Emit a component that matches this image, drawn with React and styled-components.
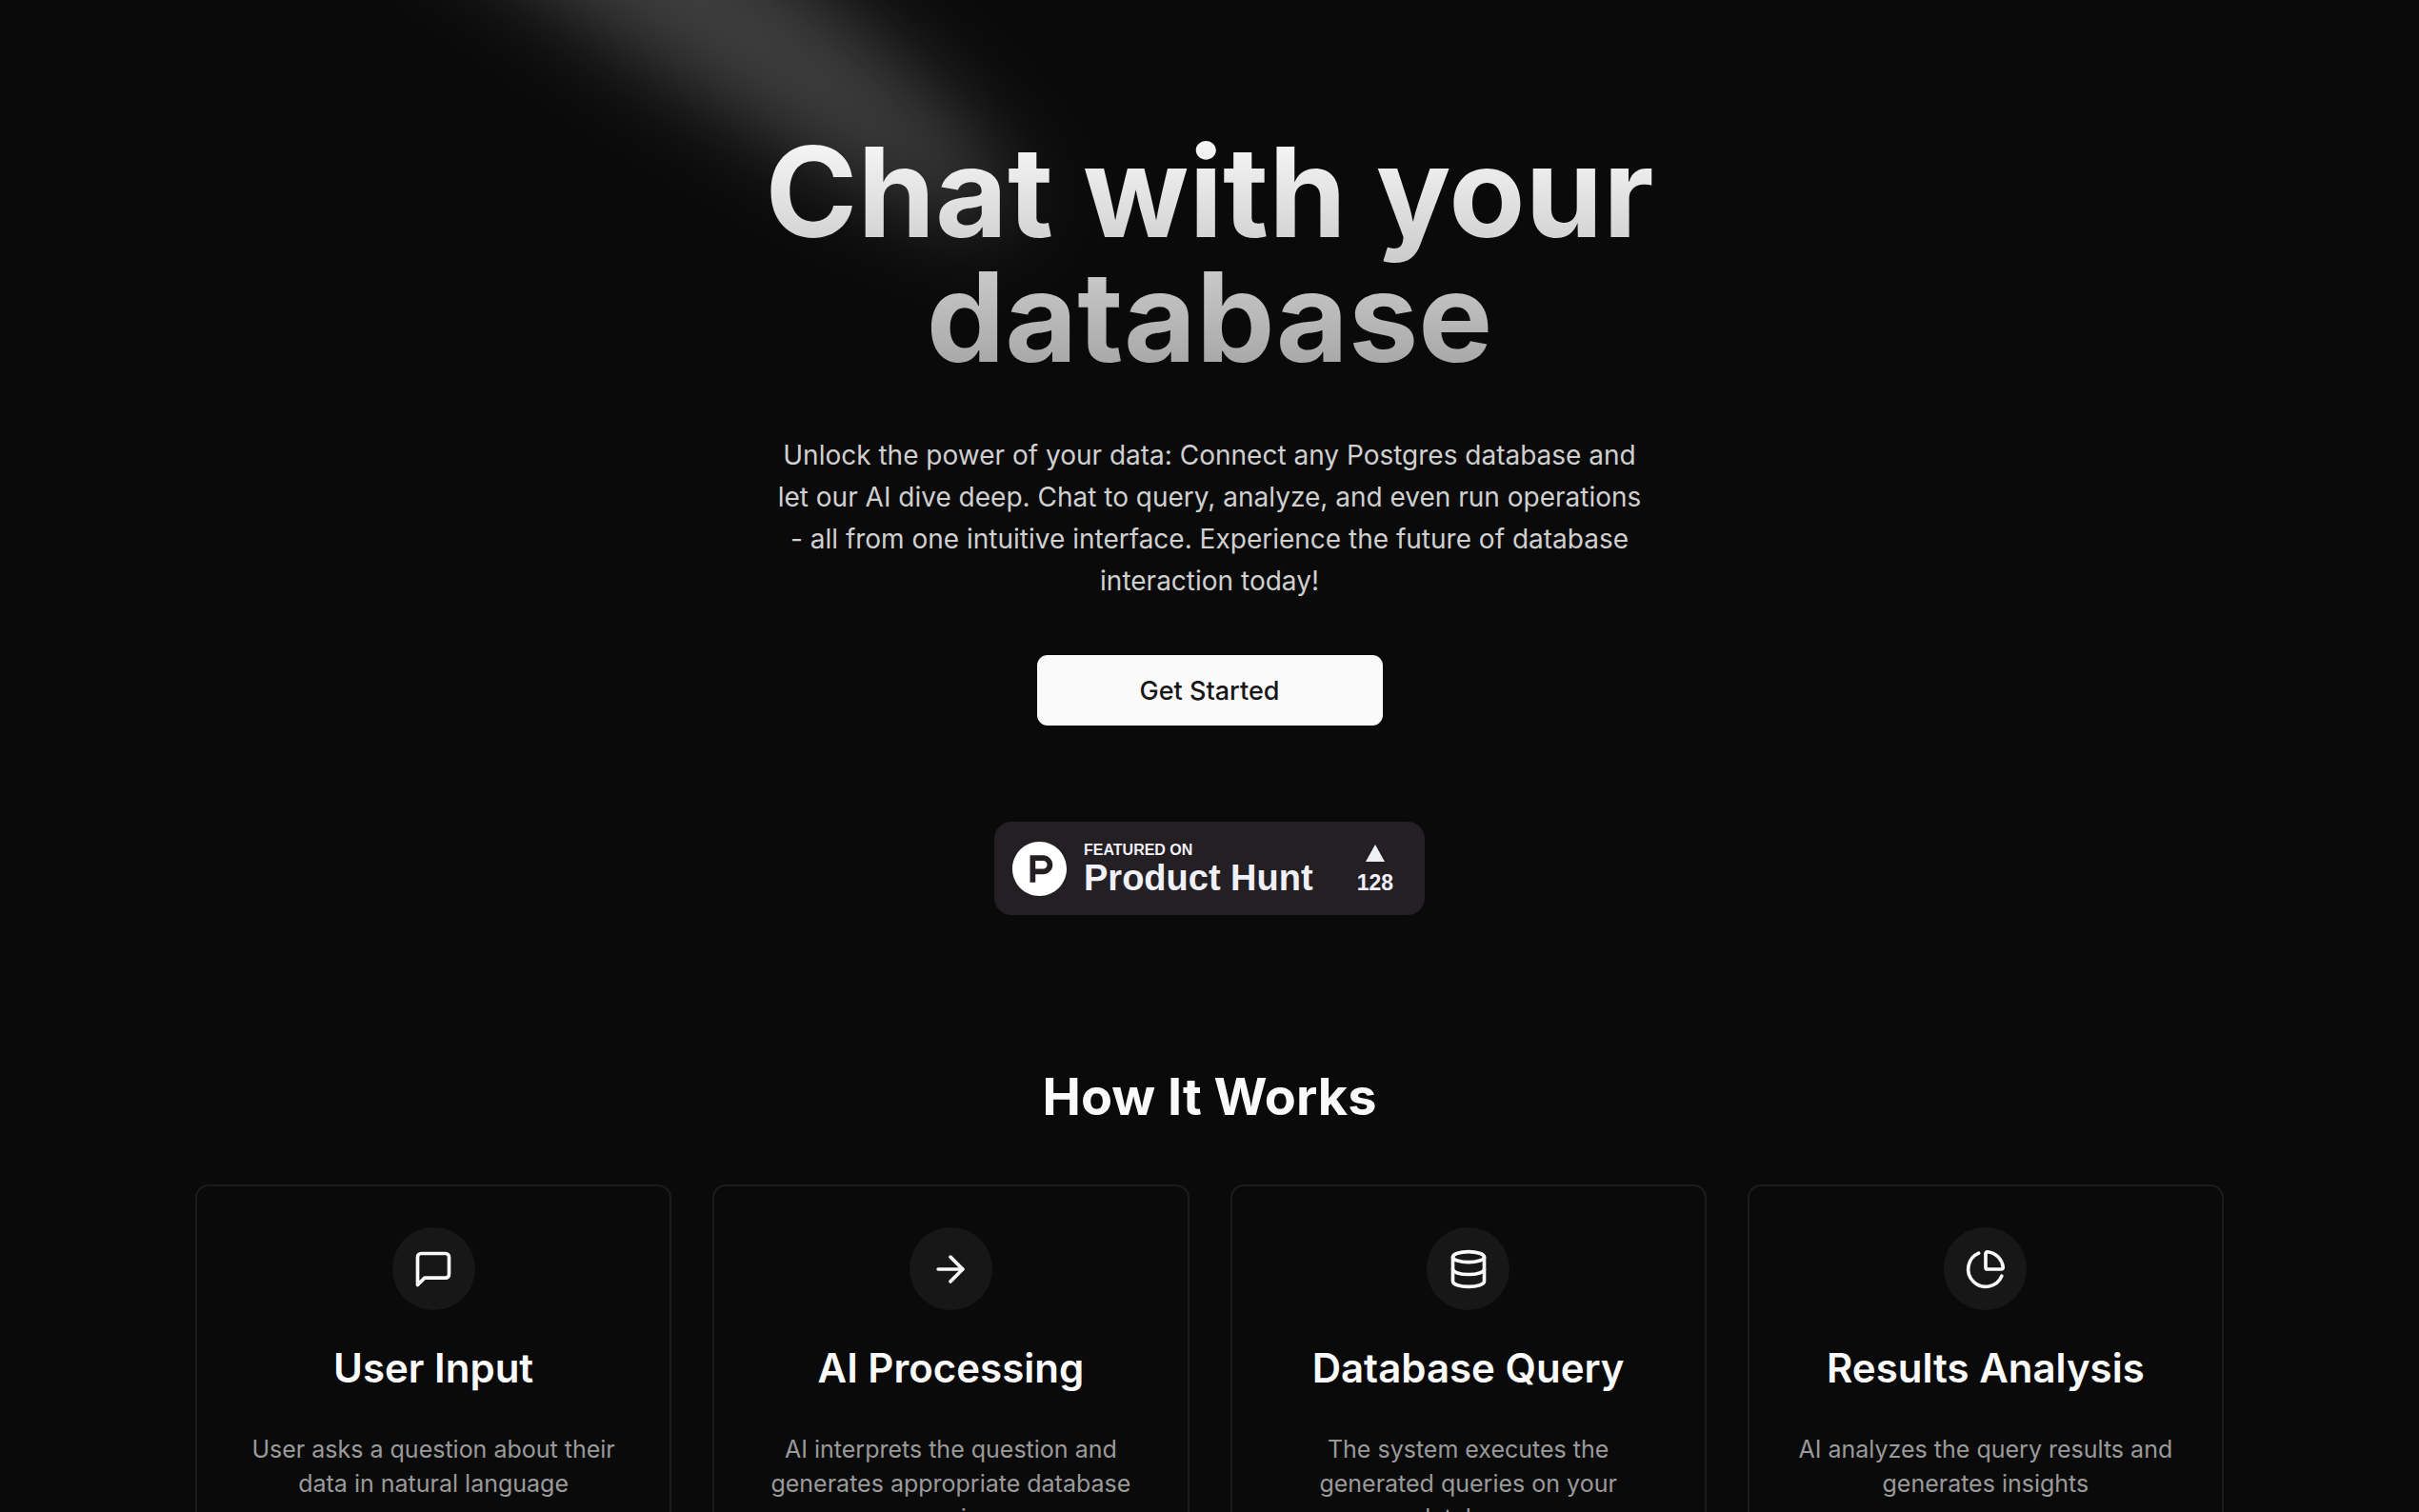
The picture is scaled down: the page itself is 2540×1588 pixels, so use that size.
import React from "react";
import styled, { createGlobalStyle } from "styled-components";
import { ArrowRight, ChartPie, Database } from "lucide-react";
import { SiProducthunt } from "react-icons/si";

const GlobalStyle = createGlobalStyle`
  *, *::before, *::after {
    box-sizing: border-box;
  }

  body {
    margin: 0;
    background: #0a0a0a;
    color: #fafafa;
    font-family: Inter, "Liberation Sans", sans-serif;
  }
`;

const Page = styled.main`
  position: relative;
  display: flex;
  flex-direction: column;
  align-items: center;
  min-height: 100vh;
  padding: 136px 64px 0;
  overflow: hidden;
`;

const Spotlight = styled.svg`
  position: absolute;
  top: 0;
  left: 0;
  width: 100%;
  height: 600px;
  pointer-events: none;
`;

const Hero = styled.section`
  position: relative;
  display: flex;
  flex-direction: column;
  align-items: center;
  width: 100%;
  max-width: 960px;
  text-align: center;
`;

const HeroTitle = styled.h1`
  margin: 0;
  font-size: 131px;
  font-weight: 700;
  line-height: 131px;
  color: transparent;
  background: linear-gradient(to bottom, #fafafa, #a3a3a3);
  background-clip: text;
  -webkit-background-clip: text;
`;

const HeroText = styled.p`
  max-width: 920px;
  margin: 58px 0 56px;
  color: #d0d0d0;
  font-size: 28px;
  line-height: 44px;
`;

const StartButton = styled.button`
  width: 363px;
  height: 74px;
  border: 0;
  border-radius: 11px;
  background: #fafafa;
  color: #171717;
  font-family: inherit;
  font-size: 27px;
  font-weight: 500;
  cursor: pointer;
`;

const Badge = styled.a`
  display: flex;
  align-items: center;
  width: 452px;
  height: 98px;
  margin-top: 101px;
  padding: 0 33px 0 19px;
  border-radius: 18px;
  background: #231f22;
  color: #f0f0f8;
  font-family: "Liberation Sans", Arial, sans-serif;
  font-weight: 700;
  text-align: left;
  text-decoration: none;
`;

const BadgeLogo = styled(SiProducthunt)`
  width: 57px;
  height: 57px;
  color: #fff;
`;

const BadgeText = styled.span`
  display: flex;
  flex-direction: column;
  flex: 1;
  margin-left: 18px;
  padding-top: 2px;
`;

const BadgeLabel = styled.span`
  font-size: 16px;
  line-height: 18px;
`;

const BadgeName = styled.span`
  font-size: 38px;
  line-height: 40px;
`;

const Votes = styled.span`
  display: flex;
  flex-direction: column;
  align-items: center;
  gap: 8px;
  padding-top: 3px;
  font-size: 23px;
  line-height: 28px;
`;

const VoteArrow = styled.svg`
  width: 20px;
  height: 18px;
  fill: currentColor;
`;

const HowItWorks = styled.section`
  position: relative;
  width: 100%;
  max-width: 2130px;
  padding: 159px 0 80px;
`;

const SectionTitle = styled.h2`
  margin: 0 0 60px;
  font-size: 54px;
  font-weight: 700;
  line-height: 64px;
  text-align: center;
`;

const Steps = styled.div`
  display: grid;
  grid-template-columns: repeat(4, 1fr);
  gap: 43px;
`;

const StepCard = styled.article`
  display: flex;
  flex-direction: column;
  align-items: center;
  padding: 43px;
  border: 2px solid #1c1c1c;
  border-radius: 14px;
  text-align: center;
`;

const StepIcon = styled.div`
  display: flex;
  align-items: center;
  justify-content: center;
  width: 87px;
  height: 87px;
  border-radius: 50%;
  background: #171717;
`;

const StepTitle = styled.h3`
  margin: 39px 0 45px;
  font-size: 42px;
  font-weight: 600;
  line-height: 44px;
  white-space: nowrap;
`;

const StepText = styled.p`
  margin: 0;
  color: #9a9a9a;
  font-size: 25px;
  line-height: 36px;
`;

// Speech bubble with a sharp tail
const Message = ({ size, ...rest }) => (
  <svg
    width={size}
    height={size}
    viewBox="0 0 24 24"
    fill="none"
    stroke="currentColor"
    strokeWidth="2"
    strokeLinecap="round"
    strokeLinejoin="round"
    {...rest}
  >
    <path d="M21 15a2 2 0 0 1-2 2H7l-4 4V5a2 2 0 0 1 2-2h14a2 2 0 0 1 2 2z" />
  </svg>
);

const steps = [
  {
    icon: Message,
    title: "User Input",
    text: "User asks a question about their data in natural language",
  },
  {
    icon: ArrowRight,
    title: "AI Processing",
    text: "AI interprets the question and generates appropriate database queries",
  },
  {
    icon: Database,
    title: "Database Query",
    text: "The system executes the generated queries on your database",
  },
  {
    icon: ChartPie,
    title: "Results Analysis",
    text: "AI analyzes the query results and generates insights",
  },
];

const App = () => (
  <>
    <GlobalStyle />
    <Page>
      <Spotlight aria-hidden="true">
        <defs>
          <filter id="soft" x="-50%" y="-150%" width="200%" height="400%">
            <feGaussianBlur stdDeviation="45" />
          </filter>
        </defs>
        <g transform="translate(576 -110) rotate(34.7)">
          <ellipse
            rx="590"
            ry="90"
            fill="#fff"
            fillOpacity="0.21"
            filter="url(#soft)"
          />
        </g>
      </Spotlight>

      <Hero>
        <HeroTitle>Chat with your database</HeroTitle>
        <HeroText>
          Unlock the power of your data: Connect any Postgres database and let
          our AI dive deep. Chat to query, analyze, and even run operations -
          all from one intuitive interface. Experience the future of database
          interaction today!
        </HeroText>
        <StartButton type="button">Get Started</StartButton>
        <Badge href="#product-hunt">
          <BadgeLogo aria-hidden="true" />
          <BadgeText>
            <BadgeLabel>FEATURED ON</BadgeLabel>
            <BadgeName>Product Hunt</BadgeName>
          </BadgeText>
          <Votes>
            <VoteArrow viewBox="0 0 20 18" aria-hidden="true">
              <path d="M10 0 20 18H0Z" />
            </VoteArrow>
            128
          </Votes>
        </Badge>
      </Hero>

      <HowItWorks>
        <SectionTitle>How It Works</SectionTitle>
        <Steps>
          {steps.map(({ icon: Icon, title, text }) => (
            <StepCard key={title}>
              <StepIcon>
                <Icon size={44} aria-hidden="true" />
              </StepIcon>
              <StepTitle>{title}</StepTitle>
              <StepText>{text}</StepText>
            </StepCard>
          ))}
        </Steps>
      </HowItWorks>
    </Page>
  </>
);

export default App;
